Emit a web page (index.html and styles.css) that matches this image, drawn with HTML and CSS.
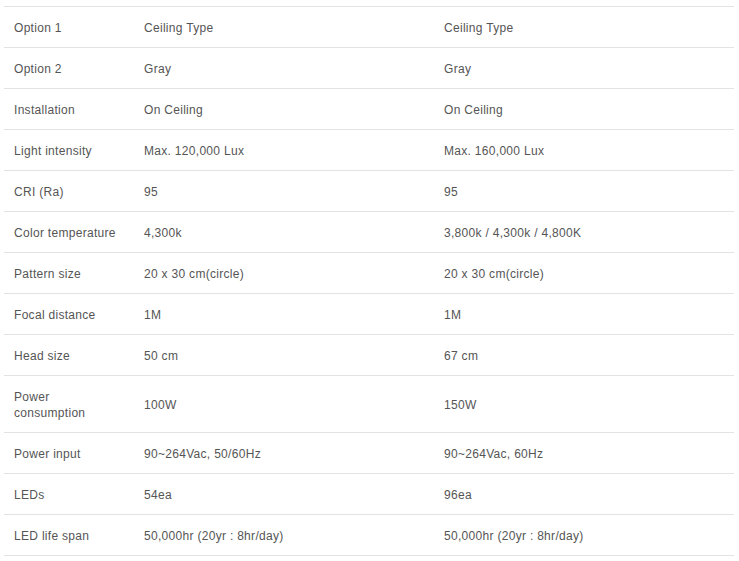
FILE: index.html
```html
<!DOCTYPE html>
<html>
<head>
<meta charset="utf-8">
<link rel="stylesheet" href="styles.css">
</head>
<body>
<table class="spec">
  <colgroup><col class="c1"><col class="c2"><col class="c3"></colgroup>
  <tbody>
    <tr><td>Option 1</td><td>Ceiling Type</td><td>Ceiling Type</td></tr>
    <tr><td>Option 2</td><td>Gray</td><td>Gray</td></tr>
    <tr><td>Installation</td><td>On Ceiling</td><td>On Ceiling</td></tr>
    <tr><td>Light intensity</td><td>Max. 120,000 Lux</td><td>Max. 160,000 Lux</td></tr>
    <tr><td>CRI (Ra)</td><td>95</td><td>95</td></tr>
    <tr><td>Color temperature</td><td>4,300k</td><td>3,800k / 4,300k / 4,800K</td></tr>
    <tr><td>Pattern size</td><td>20 x 30 cm(circle)</td><td>20 x 30 cm(circle)</td></tr>
    <tr><td>Focal distance</td><td>1M</td><td>1M</td></tr>
    <tr><td>Head size</td><td>50 cm</td><td>67 cm</td></tr>
    <tr><td>Power<br>consumption</td><td>100W</td><td>150W</td></tr>
    <tr><td>Power input</td><td>90~264Vac, 50/60Hz</td><td>90~264Vac, 60Hz</td></tr>
    <tr><td>LEDs</td><td>54ea</td><td>96ea</td></tr>
    <tr><td>LED life span</td><td>50,000hr (20yr : 8hr/day)</td><td>50,000hr (20yr : 8hr/day)</td></tr>
  </tbody>
</table>
</body>
</html>
```
FILE: styles.css
```css
html, body {
  margin: 0;
  padding: 0;
  background: #fff;
}
body {
  padding: 6px 0 0 4px;
  font-family: "Liberation Sans", Arial, sans-serif;
  font-size: 12px;
  letter-spacing: 0.3px;
  color: #555;
}
.spec {
  width: 730px;
  border-collapse: collapse;
  table-layout: fixed;
}
.c1 { width: 130px; }
.c2 { width: 300px; }
.spec td {
  border-top: 1px solid #e3e3e3;
  border-bottom: 1px solid #e3e3e3;
  padding: 13px 10px 11px;
  line-height: 16px;
  vertical-align: middle;
  text-align: left;
}
```
